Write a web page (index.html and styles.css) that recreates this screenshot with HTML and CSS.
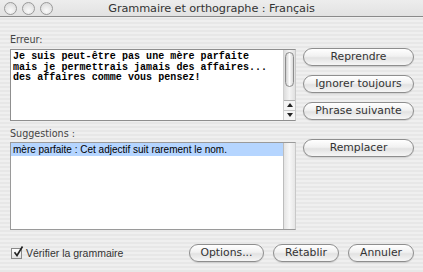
FILE: index.html
```html
<!DOCTYPE html>
<html>
<head>
<meta charset="utf-8">
<link rel="stylesheet" href="styles.css">
</head>
<body>
<div class="window">
  <div class="titlebar">
    <div class="lights"><span class="light"></span><span class="light"></span><span class="light"></span></div>
    <div class="title">Grammaire et orthographe : Français</div>
  </div>
  <div class="main">
    <div class="left">
      <div class="label first">Erreur:</div>
      <div class="errbox">
        <div class="errtext">Je suis peut-être pas une mère parfaite<br>mais je permettrais jamais des affaires...<br>des affaires comme vous pensez!</div>
        <div class="scroll">
          <div class="thumb"></div>
          <div class="arrows">
            <div class="arrow up"></div>
            <div class="arrow down"></div>
          </div>
        </div>
      </div>
      <div class="label second">Suggestions :</div>
      <div class="listbox">
        <div class="list">
          <div class="row sel">mère parfaite : Cet adjectif suit rarement le nom.</div>
        </div>
        <div class="track"></div>
      </div>
    </div>
    <div class="right">
      <button class="btn">Reprendre</button>
      <button class="btn">Ignorer toujours</button>
      <button class="btn">Phrase suivante</button>
      <button class="btn gap">Remplacer</button>
    </div>
  </div>
  <div class="bottom">
    <label class="check"><span class="box"><svg width="12" height="12" viewBox="0 0 12 12"><path d="M2.5 6.2 L5 9.5 L10.5 0.5" fill="none" stroke="#222" stroke-width="1.6"/></svg></span>Vérifier la grammaire</label>
    <div class="btns">
      <button class="btn small opt">Options...</button>
      <button class="btn small ret">Rétablir</button>
      <button class="btn small ann">Annuler</button>
    </div>
  </div>
</div>
</body>
</html>
```
FILE: styles.css
```css
html, body { margin: 0; padding: 0; }
body {
  width: 423px; height: 272px; overflow: hidden;
  font-family: "DejaVu Sans", "Liberation Sans", sans-serif;
}
.window {
  width: 423px; height: 272px;
  background: repeating-linear-gradient(to bottom, #efefef 0, #efefef 2px, #e7e7e7 2px, #e7e7e7 4px);
  display: flex; flex-direction: column;
}
.titlebar {
  height: 16px; position: relative;
  background: linear-gradient(#ededed, #e2e2e2);
  border-bottom: 1px solid #8a8a8a;
  display: flex; align-items: center; justify-content: center;
}
.lights { position: absolute; left: 4px; top: 2px; display: flex; gap: 5px; }
.light {
  width: 11px; height: 11px; border-radius: 50%;
  border: 1px solid #9a9a9a;
  background: radial-gradient(circle at 50% 70%, #fafafa, #d6d6d6);
}
.title { font-size: 11.3px; color: #333; letter-spacing: -0.1px; margin-top: 1px; }
.main { display: flex; padding-left: 10px; }
.left { width: 286px; display: flex; flex-direction: column; }
.label { font-size: 9.6px; color: #444; height: 12px; line-height: 12px; }
.label.first { margin-top: 17px; margin-bottom: 3px; }
.label.second { margin-top: 7px; margin-bottom: 2px; }
.errbox {
  height: 70px; background: #fff;
  border: 1px solid #8f8f8f; border-right: 1px solid #c8c8c8;
  display: flex;
}
.errtext {
  flex: 1; padding: 2px 0 0 2px;
  font-family: "Liberation Mono", monospace; font-weight: bold;
  font-size: 10px; letter-spacing: 0.05px; line-height: 10.5px; color: #000; white-space: nowrap; overflow: hidden;
}
.scroll {
  width: 11px; border-left: 1px solid #d0d0d0;
  background: linear-gradient(to right, #dcdcdc, #f4f4f4 50%, #e0e0e0);
  display: flex; flex-direction: column; justify-content: space-between;
}
.thumb {
  margin: 2px 1px 0 1px; height: 33px; border-radius: 5px;
  border: 1px solid #8c8c8c;
  background: linear-gradient(to right, #cfcfcf, #fdfdfd 50%, #d8d8d8);
}
.arrows { border-top: 1px solid #b0b0b0; background: #f5f5f5; }
.arrow { height: 9px; position: relative; }
.arrow.up { border-bottom: 1px solid #c8c8c8; }
.arrow::after {
  content: ""; position: absolute; left: 3px; top: 2px;
  border-left: 3px solid transparent; border-right: 3px solid transparent;
}
.arrow.up::after { border-bottom: 4px solid #222; }
.arrow.down::after { border-top: 4px solid #222; }
.listbox {
  height: 86px; background: #fff;
  border: 1px solid #9a9a9a; border-right: 1px solid #c8c8c8;
  display: flex;
}
.list { flex: 1; }
.row { font-family: "Liberation Sans", sans-serif; font-size: 10px; height: 13px; line-height: 13px; padding-left: 2px; color: #000; }
.row.sel { background: #b5d5ff; }
.track {
  width: 11px; border-left: 1px solid #bdbdbd;
  background: linear-gradient(to right, #e4e4e4, #f7f7f7 50%, #e6e6e6);
}
.right { display: flex; flex-direction: column; margin-left: 7px; padding-top: 31px; }
.btn {
  width: 111px; height: 18px; margin-bottom: 9px;
  border: 1px solid #8e8e8e; border-radius: 9px;
  background: linear-gradient(#ffffff, #f1f1f1 45%, #e2e2e2 55%, #f6f6f6);
  font-family: "DejaVu Sans", sans-serif; font-size: 10.8px; color: #333;
  padding: 0; line-height: 16px; box-shadow: 0 1px 1px rgba(0,0,0,0.12);
}
.btn.gap { margin-top: 10px; }
.bottom {
  display: flex; justify-content: space-between; align-items: center;
  margin-top: 14px; padding: 0 9px 0 11px;
}
.check { display: flex; align-items: center; font-family: "Liberation Sans", sans-serif; font-size: 10.5px; color: #333; gap: 3px; }
.box {
  width: 11px; height: 11px; border: 1px solid #8a8a8a; background: linear-gradient(#fff, #e0e0e0);
  position: relative; box-sizing: border-box; margin-right: 1px;
}
.box svg { position: absolute; left: 0; top: -3px; }
.btns { display: flex; gap: 9px; margin-right: 0; }
.btn.small { margin-bottom: 0; }
.btn.opt { width: 75px; }
.btn.ret { width: 66px; }
.btn.ann { width: 66px; }
```
